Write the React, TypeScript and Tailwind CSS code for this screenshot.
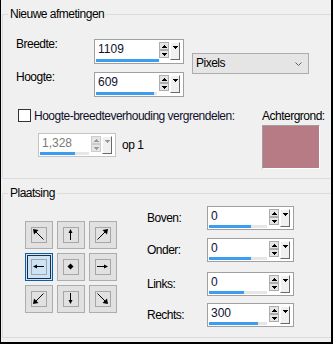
import React from 'react';

const Tri = ({ down, color = '#000' }: { down?: boolean; color?: string }) => (
  <svg width="5" height="3" viewBox="0 0 5 3" shapeRendering="crispEdges" className="block">
    {down ? (
      <>
        <rect x="0" y="0" width="5" height="1" fill={color} />
        <rect x="1" y="1" width="3" height="1" fill={color} />
        <rect x="2" y="2" width="1" height="1" fill={color} />
      </>
    ) : (
      <>
        <rect x="2" y="0" width="1" height="1" fill={color} />
        <rect x="1" y="1" width="3" height="1" fill={color} />
        <rect x="0" y="2" width="5" height="1" fill={color} />
      </>
    )}
  </svg>
);

interface SpinProps {
  value: string;
  bar: number;
  size: string;
  disabled?: boolean;
}

const Spin: React.FC<SpinProps> = ({ value, bar, size, disabled }) => {
  const tri = disabled ? '#9a9a9a' : '#000';
  return (
    <div
      className={`flex shrink-0 border bg-white pl-[1px] pr-[3px] pt-[2px] pb-[1px] tracking-normal ${size} ${
        disabled ? 'border-[#c4c4c4]' : 'border-[#a0a0a0]'
      }`}
    >
      <div className="flex min-w-0 flex-1 flex-col justify-between">
        <span className={`pl-[2px] leading-[15px] ${disabled ? 'text-[#7a7a7a]' : 'text-[#101030]'}`}>{value}</span>
        <div className="h-[3px] bg-[#e6e6e6]">
          <div className="h-full bg-[#3c9cf0]" style={{ width: bar }} />
        </div>
      </div>
      <div className="ml-[2px] flex w-[10px] flex-col self-start">
        <div className={`flex h-[8px] items-center justify-center border bg-[#e5e5e5] ${disabled ? 'border-[#cccccc]' : 'border-[#adadad]'}`}>
          <Tri color={tri} />
        </div>
        <div className={`flex h-[8px] items-center justify-center border bg-[#e5e5e5] ${disabled ? 'border-[#cccccc]' : 'border-[#adadad]'}`}>
          <Tri down color={tri} />
        </div>
      </div>
      <div className="ml-[1px] flex h-[18px] w-[10px] justify-center self-start border-t border-l border-r border-b border-t-white border-l-white border-r-[#696969] border-b-[#696969] bg-[#f0f0f0] pt-[3px]">
        <Tri down color={tri} />
      </div>
    </div>
  );
};

type Dir = 'nw' | 'n' | 'ne' | 'w' | 'c' | 'e' | 'sw' | 's' | 'se';

const Arrow = ({ dir }: { dir: Dir }) => {
  const shapes: Record<Dir, React.ReactNode> = {
    nw: (
      <>
        <line x1="3" y1="3" x2="11.5" y2="11.5" stroke="#000" />
        <polygon points="1,1 6.5,2 2,6.5" fill="#000" />
      </>
    ),
    n: (
      <>
        <line x1="6.5" y1="3" x2="6.5" y2="12" stroke="#000" />
        <polygon points="6.5,1 4.5,5 8.5,5" fill="#000" />
      </>
    ),
    ne: (
      <>
        <line x1="10" y1="3" x2="1.5" y2="11.5" stroke="#000" />
        <polygon points="12,1 6.5,2 11,6.5" fill="#000" />
      </>
    ),
    w: (
      <>
        <line x1="3" y1="6.5" x2="12" y2="6.5" stroke="#000" />
        <polygon points="1,6.5 5,4.5 5,8.5" fill="#000" />
      </>
    ),
    c: <polygon points="6.5,3.5 9.5,6.5 6.5,9.5 3.5,6.5" fill="#000" />,
    e: (
      <>
        <line x1="1" y1="6.5" x2="10" y2="6.5" stroke="#000" />
        <polygon points="12,6.5 8,4.5 8,8.5" fill="#000" />
      </>
    ),
    sw: (
      <>
        <line x1="3" y1="10" x2="11.5" y2="1.5" stroke="#000" />
        <polygon points="1,12 2,6.5 6.5,11" fill="#000" />
      </>
    ),
    s: (
      <>
        <line x1="6.5" y1="1" x2="6.5" y2="10" stroke="#000" />
        <polygon points="6.5,12 4.5,8 8.5,8" fill="#000" />
      </>
    ),
    se: (
      <>
        <line x1="1.5" y1="1.5" x2="10" y2="10" stroke="#000" />
        <polygon points="12,12 11,6.5 6.5,11" fill="#000" />
      </>
    ),
  };
  return (
    <svg width="14" height="14" viewBox="0 0 14 14" className="block">
      {shapes[dir]}
    </svg>
  );
};

const PosButton = ({ dir, selected }: { dir: Dir; selected?: boolean }) => {
  const inner = (
    <div className="h-[16px] w-[16px] border border-[#a6a6a6]">
      <Arrow dir={dir} />
    </div>
  );
  if (selected) {
    return (
      <div className="flex h-[28px] w-[28px] border border-[#0a5ea8] bg-[#cce4f7] p-[1px]">
        <div className="flex flex-1 items-center justify-center border border-[#1c2f44]">{inner}</div>
      </div>
    );
  }
  return (
    <div className="flex h-[28px] w-[28px] items-center justify-center border border-[#adadad] bg-[#e1e1e1]">
      {inner}
    </div>
  );
};

const offsets: { label: string; value: string; bar: number; mt: string }[] = [
  { label: 'Boven:', value: '0', bar: 42, mt: 'mt-0' },
  { label: 'Onder:', value: '0', bar: 42, mt: 'mt-[8px]' },
  { label: 'Links:', value: '0', bar: 35, mt: 'mt-[10px]' },
  { label: 'Rechts:', value: '300', bar: 49, mt: 'mt-[7px]' },
];

const dirs: Dir[] = ['nw', 'n', 'ne', 'w', 'c', 'e', 'sw', 's', 'se'];

export default function App() {
  return (
    <div className="h-[344px] w-[333px] overflow-hidden border-l border-r-2 border-b-2 border-black bg-[#f0f0f0] font-['Liberation_Sans',Arial,sans-serif] text-[12px] leading-[15px] tracking-[-0.5px] text-black">
      {/* Nieuwe afmetingen */}
      <fieldset className="ml-[1px] mt-[7px] border-t border-l border-b border-[#dcdcdc]">
        <legend className="ml-[5px] px-[2px]">Nieuwe afmetingen</legend>
        <div className="pl-[13px] pt-[17px] pb-[9px]">
          <div className="flex items-start">
            <div className="flex flex-col">
              <div className="flex items-start">
                <span className="-mt-[2px] w-[78px]">Breedte:</span>
                <Spin value="1109" bar={63} size="w-[90px] h-[25px]" />
              </div>
              <div className="mt-[8px] flex items-start">
                <span className="-mt-[2px] w-[78px]">Hoogte:</span>
                <Spin value="609" bar={58} size="w-[90px] h-[25px]" />
              </div>
            </div>
            <div className="ml-[8px] mt-[14px] flex h-[21px] w-[117px] items-center justify-between border border-[#adadad] bg-[#e5e5e5] pl-[3px] pr-[6px]">
              <span>Pixels</span>
              <svg width="7" height="4" viewBox="0 0 7 4" className="block">
                <polyline points="0.5,0.5 3.5,3.5 6.5,0.5" fill="none" stroke="#606060" />
              </svg>
            </div>
          </div>

          <div className="mt-[12px] flex items-start">
            <div className="w-[246px]">
              <label className="ml-[2px] flex items-start">
                <span className="h-[13px] w-[13px] border border-[#333333] bg-white" />
                <span className="ml-[3px] whitespace-nowrap text-[#10102a]">Hoogte-breedteverhouding vergrendelen:</span>
              </label>
              <div className="ml-[22px] mt-[9px] flex items-center">
                <Spin value="1,328" bar={35} size="w-[78px] h-[24px]" disabled />
                <span className="ml-[6px]">op 1</span>
              </div>
            </div>
            <div className="flex flex-col">
              <span className="whitespace-nowrap">Achtergrond:</span>
              <div className="mt-[1px] h-[44px] w-[58px] border-t border-l border-r border-b border-t-[#a0a0a0] border-l-[#a0a0a0] border-r-white border-b-white bg-[#b67b84]" />
            </div>
          </div>
        </div>
      </fieldset>

      {/* Plaatsing */}
      <fieldset className="ml-[1px] mt-[7px] border-t border-l border-b border-[#dcdcdc]">
        <legend className="ml-[5px] px-[2px]">Plaatsing</legend>
        <div className="flex items-start pl-[22px] pb-[10px]">
          <div className="mt-[20px] grid grid-cols-[28px_28px_28px] gap-[4px]">
            {dirs.map((d) => (
              <PosButton key={d} dir={d} selected={d === 'w'} />
            ))}
          </div>
          <div className="ml-[30px] mt-[5px] flex flex-col">
            {offsets.map((o) => (
              <div key={o.label} className={`flex items-center ${o.mt}`}>
                <span className="w-[60px]">{o.label}</span>
                <Spin value={o.value} bar={o.bar} size="w-[87px] h-[24px]" />
              </div>
            ))}
          </div>
        </div>
      </fieldset>
    </div>
  );
}
